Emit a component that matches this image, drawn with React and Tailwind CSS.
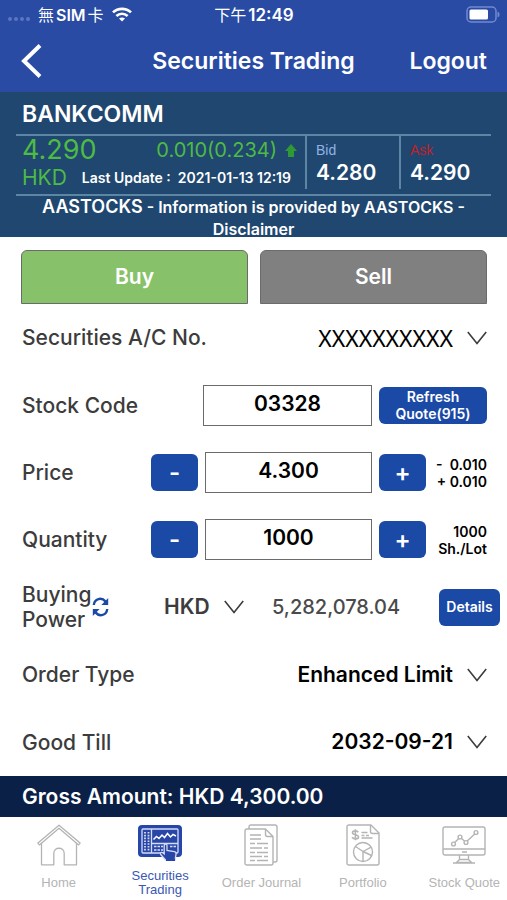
import React, { useState } from 'react';

const rowLabel = 'text-[21px] leading-[25px] font-medium text-[#3c3c3c]';
const blueButton = 'bg-[#1b49a6] text-white rounded-md flex items-center justify-center shrink-0';
const textBox = 'h-[41px] border border-[#6b6b6b] pb-1 text-center text-[21px] font-semibold text-black';

const WifiIcon = () => (
  <svg width="20" height="15" viewBox="0 0 20 15" fill="none" stroke="white" strokeWidth="2.7" aria-hidden="true">
    <path d="M1 5.4C6 .6 14 .6 19 5.4" />
    <path d="M4.4 9C7.6 6 12.4 6 15.6 9" />
    <path d="M10 14.6 7 11.6c1.8-1.6 4.2-1.6 6 0z" fill="white" stroke="none" />
  </svg>
);

const BatteryIcon = () => (
  <svg width="34" height="17" viewBox="0 0 34 17" fill="none" aria-hidden="true">
    <rect x="1" y="1" width="29" height="15" rx="4" stroke="#7289d0" strokeWidth="1.500" />
    <rect x="3.500" y="3.500" width="18.500" height="10" rx="1.500" fill="white" />
    <path d="M32 6.200c1.400.8 1.400 3.800 0 4.600z" fill="#7289d0" stroke="#7289d0" />
  </svg>
);

const Chevron = () => (
  <svg className="shrink-0 pointer-events-none" width="20" height="14" viewBox="0 0 20 14" fill="none" stroke="#3c3c3c" strokeWidth="1.6" aria-hidden="true">
    <path d="M.8 1 10 12.500 19.200 1" />
  </svg>
);

const SyncIcon = () => (
  <svg width="17" height="20" viewBox="0 0 17 20" fill="none" stroke="#1b49a6" strokeWidth="2.400" aria-hidden="true">
    <path d="M1.800 8C2.400 1.600 9.500-.2 13.600 4.600" />
    <path d="M16.200 1v7H9.400z" fill="#1b49a6" stroke="none" />
    <path d="M15.200 12C14.600 18.400 7.500 20.200 3.400 15.400" />
    <path d="M.8 19v-7h6.800z" fill="#1b49a6" stroke="none" />
  </svg>
);

const HomeIcon = () => (
  <svg width="44" height="42" viewBox="0 0 44 42" fill="none" stroke="#b4b4b4" strokeWidth="1.3" strokeLinejoin="round" aria-hidden="true">
    <path d="M4.500 18.500v22.300h12.300V29.500c0-7 10.400-7 10.400 0v11.300h12.300V18.500" />
    <path d="M22 1.200.9 19.100l1.500 1.800L22 4.200l19.600 16.700 1.500-1.800z" />
  </svg>
);

const TradingIcon = () => (
  <svg width="44" height="36" viewBox="0 0 44 36" fill="none" aria-hidden="true">
    <rect x="0" y="0" width="44" height="32" rx="4" fill="#2746a8" />
    <rect x="4" y="4" width="36" height="24" rx="1" stroke="#d5dcf3" strokeWidth="1.300" />
    <path d="M13.500 4v24M13.500 18.500H40" stroke="#d5dcf3" strokeWidth="1.300" />
    <path d="M7 7v19M10.500 7v19" stroke="#d5dcf3" strokeWidth="1.800" strokeDasharray="1.600 1.200" />
    <path d="m15.500 14.500 3-3 2.500 2 3-3.500 2.500 2.500 3-4 3 3.500 2.500-2.500 3 1.500" stroke="white" strokeWidth="1.500" />
    <path d="M16 21.500h9M16 25h9M32 21.500h7" stroke="#d5dcf3" strokeWidth="1.600" strokeDasharray="2.500 1" />
    <path d="M26.200 20.500c0-2 2.800-2 2.800 0v5l7.500 1.200c1.500.3 1.700 1.300 1.500 2.600l-1 5.700h-9.500l-4.800-5.500c-1-1.700.8-2.800 2-1.700l1.500 1.200z" fill="#2746a8" stroke="#d5dcf3" strokeWidth="1.300" />
    <path d="M28 34.800h9" stroke="#2746a8" strokeWidth="2.400" />
  </svg>
);

const JournalIcon = () => (
  <svg width="34" height="42" viewBox="0 0 34 42" fill="none" stroke="#b4b4b4" strokeWidth="1.400" strokeLinejoin="round" aria-hidden="true">
    <path d="M5 5V3q0-2 2-2h24q2 0 2 2v33q0 2-2 2h-2" />
    <path d="M3 5h18.500l7.500 7.500V39q0 2-2 2H3q-2 0-2-2V7q0-2 2-2z" />
    <path d="M21.500 5v5.500q0 2 2 2H29" />
    <path d="M6 11h11M6 15h11M6 19.500h5M13 19.500h11M6 24h12M20 24h4M6 28.500h5M13 28.500h11M6 32.500h12M20 32.500h4M6 36.500h5M13 36.500h11" />
  </svg>
);

const PortfolioIcon = () => (
  <svg width="34" height="42" viewBox="0 0 34 42" fill="none" stroke="#b4b4b4" strokeWidth="1.400" strokeLinejoin="round" aria-hidden="true">
    <path d="M3 1h22l8 8v30q0 2-2 2H3q-2 0-2-2V3q0-2 2-2z" />
    <path d="M24.500 1v6.500q0 2 2 2H33" />
    <path d="M12.300 8.200C11 6.300 6.500 6.300 6.500 8.800c0 2.700 6 1.300 6 4.100 0 2.600-4.900 2.500-6.500.4M9.400 5.300v11" strokeWidth="1.600" />
    <path d="M15.500 8.500h6M15.500 11.500h3M20 11.500h3M15.500 14h11" />
    <circle cx="17" cy="28" r="9.500" />
    <path d="M9.500 22.500 17 27.500l8.200-4.300M17 27.500v10M17 27.500l8.500 4" />
  </svg>
);

const QuoteIcon = () => (
  <svg width="44" height="38" viewBox="0 0 44 38" fill="none" stroke="#b4b4b4" strokeWidth="1.400" strokeLinejoin="round" aria-hidden="true">
    <rect x="1" y="1" width="42" height="28" rx="2" />
    <path d="M1 23h42M20 26h5" />
    <circle cx="11.500" cy="18" r="1.900" />
    <circle cx="18" cy="11" r="1.900" />
    <circle cx="24" cy="16.500" r="1.900" />
    <circle cx="34" cy="6.500" r="1.900" />
    <path d="m12.800 16.600 3.900-4.200M19.400 12.300l3.200 2.900M25.200 15l7.500-7.100" />
    <path d="M17.500 29v4.500l-3 3h15l-3-3V29M17.500 33.500h9M11 37h22" />
  </svg>
);

const tabs = [
  { label: 'Home', icon: HomeIcon },
  { label: 'Securities Trading', icon: TradingIcon, active: true },
  { label: 'Order Journal', icon: JournalIcon },
  { label: 'Portfolio', icon: PortfolioIcon },
  { label: 'Stock Quote', icon: QuoteIcon },
];

const SelectRow = ({ id, label, value, valueClass = 'text-[21px] font-semibold' }) => (
  <div className="flex items-center pl-[22px] pr-5">
    <label htmlFor={id} className={rowLabel}>{label}</label>
    <div className="flex-1 flex items-center gap-[14px]">
      <select id={id} className={`flex-1 min-w-0 appearance-none bg-transparent leading-7 text-black [text-align-last:right] ${valueClass}`}>
        <option>{value}</option>
      </select>
      <Chevron />
    </div>
  </div>
);

const StepperRow = ({ id, label, initial, step, digits, children }) => {
  const [value, setValue] = useState(initial);
  const change = (by) => setValue((Number(value) + by).toFixed(digits));

  return (
    <div className="flex items-center pl-[22px] pr-5">
      <label htmlFor={id} className={`flex-1 ${rowLabel}`}>{label}</label>
      <div className="flex items-center gap-[7px]">
        <button type="button" aria-label={`Decrease ${label}`} onClick={() => change(-step)} className={`${blueButton} w-[47px] h-[37px] text-2xl font-semibold`}>-</button>
        <input id={id} value={value} onChange={(e) => setValue(e.target.value)} className={`w-[167px] ${textBox}`} />
        <button type="button" aria-label={`Increase ${label}`} onClick={() => change(step)} className={`${blueButton} w-[47px] h-[37px] text-2xl font-semibold`}>+</button>
      </div>
      <div className="w-[61px] text-right text-sm leading-[17px] font-semibold text-black whitespace-nowrap">{children}</div>
    </div>
  );
};

const App = () => {
  const [side, setSide] = useState('Buy');

  return (
    <div className="min-h-screen flex flex-col bg-white font-['Inter','Noto_Sans_CJK_TC',sans-serif]">
      <header className="bg-[#294ba3] text-white">
        <div className="grid grid-cols-3 items-center h-[29px] pl-2 pr-[7px] leading-5 font-semibold">
          <div className="flex items-center gap-2">
            <div className="flex gap-0.5 pt-2">
              {[0, 1, 2, 3].map(i => <span key={i} className="w-1 h-1 rounded-full bg-[#5a76c4]" />)}
            </div>
            <span className="flex gap-0.5 whitespace-nowrap text-base leading-5">
              <span className="font-normal">無</span>SIM<span className="font-normal">卡</span>
            </span>
            <WifiIcon />
          </div>
          <span className="flex justify-center gap-0.5 whitespace-nowrap text-[17px] leading-5">
            <span className="text-base leading-5 font-normal">下午</span>12:49
          </span>
          <div className="flex justify-end"><BatteryIcon /></div>
        </div>
        <div className="grid grid-cols-[1fr_auto_1fr] items-center h-[63px] px-5">
          <button type="button" aria-label="Back" className="w-6">
            <svg width="22" height="36" viewBox="0 0 22 36" fill="none" stroke="white" strokeWidth="4"><path d="M20 2.500 4 18l16 15.500" /></svg>
          </button>
          <h1 className="text-[23px] leading-7 font-semibold">Securities Trading</h1>
          <button type="button" className="justify-self-end text-[23px] leading-7 font-semibold">Logout</button>
        </div>
      </header>

      <section className="h-[145px] overflow-hidden bg-[#20476f] text-white px-4">
        <h2 className="h-[42px] pt-2 pl-1.5 text-[23px] leading-7 font-semibold">BANKCOMM</h2>
        <div className="flex h-[62px] border-y-2 border-[#5d86a4]">
          <div className="flex-1 pl-1.5 pr-2 text-[#4dbb45]">
            <div className="flex items-center justify-between h-7">
              <span className="text-[27px] leading-7">4.290</span>
              <span className="flex items-center gap-2 text-xl leading-7">
                0.010(0.234)
                <svg width="12" height="13" viewBox="0 0 12 13" fill="#2f9a35" aria-hidden="true"><path d="M6 0 12 7H9v6H3V7H0z" /></svg>
              </span>
            </div>
            <div className="flex items-center justify-between h-7 pr-1.5">
              <span className="text-[21px] leading-7">HKD</span>
              <span className="text-sm font-semibold text-white whitespace-pre">Last Update :  2021-01-13 12:19</span>
            </div>
          </div>
          <div className="w-[94px] h-[53px] border-l-2 border-[#5d86a4] pl-[9px] pt-1">
            <div className="font-['Liberation_Sans',sans-serif] text-sm leading-5 text-[#8fb2e6]">Bid</div>
            <div className="text-[21px] leading-[26px] font-semibold">4.280</div>
          </div>
          <div className="w-[92px] h-[53px] border-l-2 border-[#5d86a4] pl-[9px] pt-1">
            <div className="font-['Liberation_Sans',sans-serif] text-sm leading-5 text-[#c3202a]">Ask</div>
            <div className="text-[21px] leading-[26px] font-semibold">4.290</div>
          </div>
        </div>
        <p className="text-center text-base leading-[22px] font-semibold">
          <span className="text-lg leading-[22px]">AASTOCKS</span> - Information is provided by AASTOCKS - <a href="#disclaimer">Disclaimer</a>
        </p>
      </section>

      <div className="grid grid-cols-2 gap-3 pl-[21px] pr-5 pt-[13px]">
        {['Buy', 'Sell'].map(name => (
          <button
            key={name}
            type="button"
            onClick={() => setSide(name)}
            className={`h-[54px] rounded-t-md border border-[#6b6b6b] text-white text-[21px] font-semibold ${side === name ? 'bg-[#87c26a]' : 'bg-[#808080]'}`}
          >
            {name}
          </button>
        ))}
      </div>

      <form className="flex-1 grid auto-rows-fr" onSubmit={(e) => e.preventDefault()}>
        <SelectRow id="account" label="Securities A/C No." value="XXXXXXXXXX" valueClass="font-['Noto_Sans',sans-serif] text-[23px]" />

        <div className="flex items-center pl-[22px] pr-5">
          <label htmlFor="code" className={`flex-1 ${rowLabel}`}>Stock Code</label>
          <div className="flex items-center gap-[7px]">
            <input id="code" defaultValue="03328" className={`w-[169px] ${textBox}`} />
            <button type="button" className={`${blueButton} w-[108px] h-[37px] text-sm leading-[17px] font-semibold`}>Refresh<br />Quote(915)</button>
          </div>
        </div>

        <StepperRow id="price" label="Price" initial="4.300" step={0.01} digits={3}>
          <span className="whitespace-pre">-  0.010</span><br />+ 0.010
        </StepperRow>
        <StepperRow id="quantity" label="Quantity" initial="1000" step={1000} digits={0}>
          1000<br />Sh./Lot
        </StepperRow>

        <div className="flex items-center pl-[22px] pr-[7px]">
          <div className="flex items-center gap-1 w-[142px]">
            <label htmlFor="currency" className={`w-[66px] ${rowLabel}`}>Buying Power</label>
            <button type="button" aria-label="Refresh buying power"><SyncIcon /></button>
          </div>
          <div className="flex items-center gap-[14px]">
            <select id="currency" className="appearance-none bg-transparent text-[21px] leading-7 font-semibold text-[#3c3c3c]">
              <option>HKD</option>
            </select>
            <Chevron />
          </div>
          <span className="flex-1 pl-7 text-xl font-medium text-[#4a4a4a]">5,282,078.04</span>
          <button type="button" className={`${blueButton} w-[61px] h-[37px] text-sm font-semibold`}>Details</button>
        </div>

        <SelectRow id="type" label="Order Type" value="Enhanced Limit" />
        <SelectRow id="till" label="Good Till" value="2032-09-21" />
      </form>

      <div className="flex items-center h-[41px] px-[22px] bg-[#0a2046] text-white text-[21px] font-semibold">Gross Amount: HKD 4,300.00</div>

      <nav className="h-[83px] overflow-hidden font-['Liberation_Sans',sans-serif]">
        <div className="grid grid-cols-5 ml-2 -mr-2">
          {tabs.map(tab => (
            <a key={tab.label} href="#" className={`flex flex-col items-center text-center text-[13px] leading-[14px] ${tab.active ? 'text-[#3a57b5]' : 'text-[#b4b4b4]'}`}>
              <span className={`flex items-center justify-center ${tab.active ? 'h-[52px]' : 'h-[59px] pb-1'}`}><tab.icon /></span>
              <span className={tab.active ? 'w-16' : 'whitespace-nowrap'}>{tab.label}</span>
            </a>
          ))}
        </div>
      </nav>
    </div>
  );
};

export default App;
